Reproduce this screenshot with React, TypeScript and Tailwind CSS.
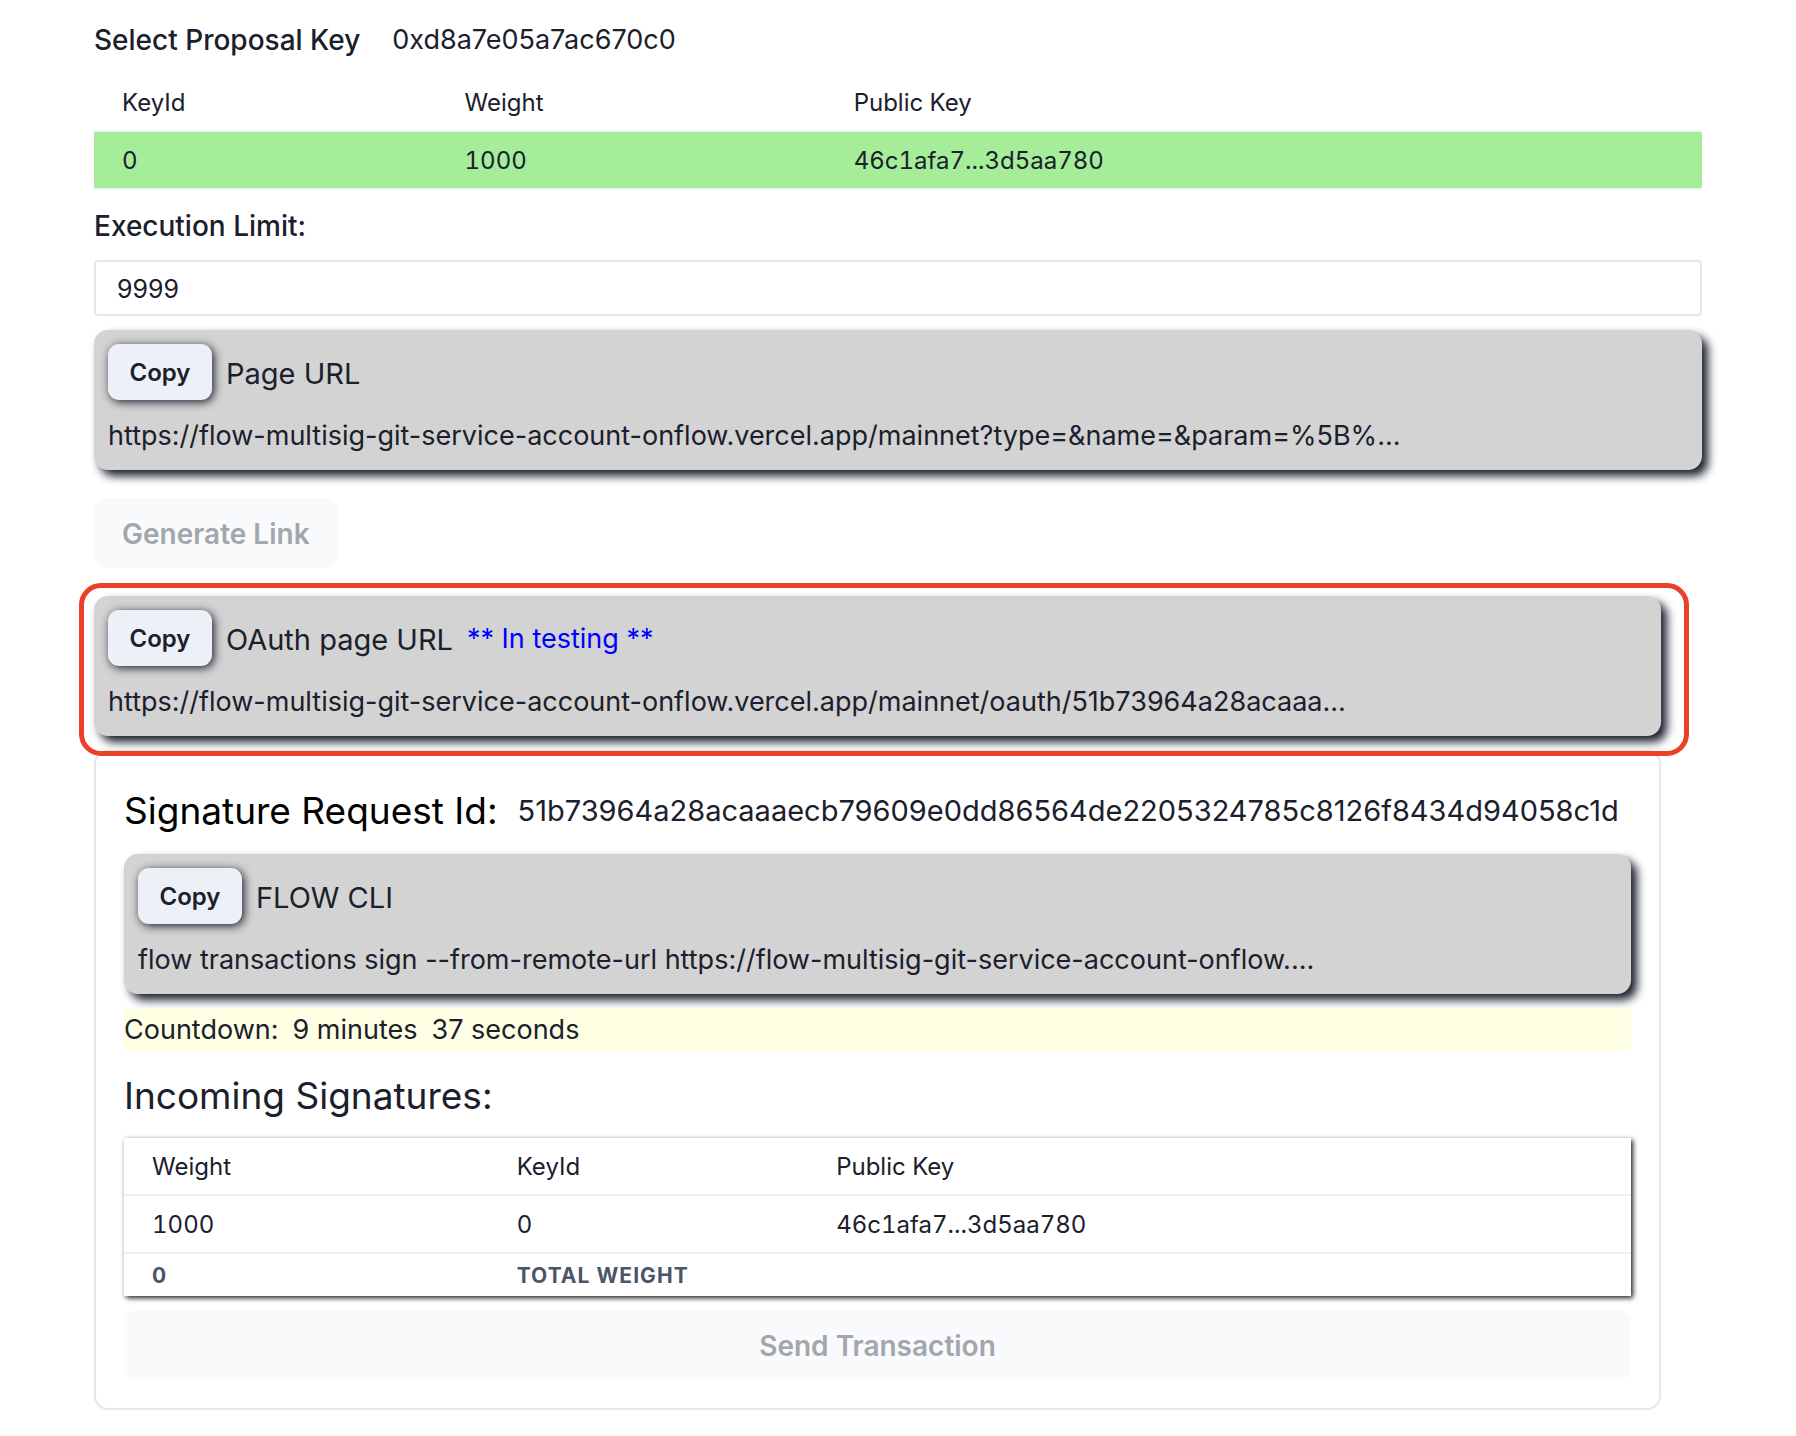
import { useState, type ReactNode } from "react";

function CopyCard({ title, note, value }: { title: string; note?: string; value: string }) {
  return (
    <div className="rounded-[14px] bg-[#d3d3d3] px-[14px] pt-[14px] pb-3 shadow-[6px_6px_10px_#1a202c]">
      <div className="flex h-14 items-center gap-[14px]">
        <button
          type="button"
          className="h-14 min-w-[104px] rounded-[11px] bg-[#edf0f6] px-5 pt-[2px] text-[24px] font-semibold shadow-[2px_2px_10px_#1a202c]"
        >
          Copy
        </button>
        <span className="pt-1 text-[29px]">{title}</span>
        {note && <span className="pt-[2px] text-[27px] text-[#0000ff]">{note}</span>}
      </div>
      <p className="mt-[14px] truncate text-[27px]">{value}</p>
    </div>
  );
}

function Row({ children, className = "" }: { children: ReactNode; className?: string }) {
  return <tr className={`h-[58px] ${className}`}>{children}</tr>;
}

const cell = "border-b-2 border-[#edf2f7] px-7 pt-[2px] text-left text-[24px] font-normal tabular-nums";
const totalCell =
  "px-7 pt-[2px] text-left text-[21px] leading-8 font-bold tracking-wider text-[#4a5568] uppercase";

export default function App() {
  const [limit, setLimit] = useState("9999");

  return (
    <main className="bg-white px-[94px] pt-[18px] pb-[26px] font-['Inter',sans-serif] text-[27px] leading-[44px] text-[#1a202c]">
      <div className="flex gap-8">
        <h2 className="text-[28px] font-medium">Select Proposal Key</h2>
        <span>0xd8a7e05a7ac670c0</span>
      </div>

      <table className="mt-3 w-full table-fixed border-separate border-spacing-0">
        <thead>
          <Row>
            <th className={`${cell} w-[21.3%]`}>KeyId</th>
            <th className={`${cell} w-[24.2%]`}>Weight</th>
            <th className={cell}>Public Key</th>
          </Row>
        </thead>
        <tbody>
          <Row className="bg-[#a6ed99]">
            <td className={cell}>0</td>
            <td className={cell}>1000</td>
            <td className={cell}>46c1afa7...3d5aa780</td>
          </Row>
        </tbody>
      </table>

      <label htmlFor="limit" className="mt-[14px] block text-[28px] font-medium">
        Execution Limit:
      </label>
      <input
        id="limit"
        value={limit}
        onChange={(e) => setLimit(e.target.value)}
        className="mt-3 block h-14 w-full rounded-[4px] border-2 border-[#e2e8f0] px-[21px] pt-[2px] text-[25px] outline-none"
      />

      <div className="mt-[14px]">
        <CopyCard
          title="Page URL"
          value="https://flow-multisig-git-service-account-onflow.vercel.app/mainnet?type=&name=&param=%5B%..."
        />
      </div>

      <button
        type="button"
        disabled
        className="mt-7 block h-[70px] rounded-[12px] bg-[#f8fafc] px-7 pt-[2px] text-[28px] font-semibold text-[#a3a6ab]"
      >
        Generate Link
      </button>

      <div className="mt-7 mr-[41px]">
        <div className="relative">
          <CopyCard
            title="OAuth page URL"
            note="** In testing **"
            value="https://flow-multisig-git-service-account-onflow.vercel.app/mainnet/oauth/51b73964a28acaaa..."
          />
          <div className="pointer-events-none absolute -top-[13px] -right-7 -bottom-5 -left-[15px] z-10 rounded-[22px] border-5 border-[#eb4128]" />
        </div>

        <section className="mt-[14px] rounded-[14px] border-2 border-[#e2e8f0] p-7">
          <div className="flex h-[60px] items-center gap-5 pt-[2px] whitespace-nowrap">
            <h2 className="text-[37px] text-black">Signature Request Id:</h2>
            <span className="text-[29px]">51b73964a28acaaaecb79609e0dd86564de2205324785c8126f8434d94058c1d</span>
          </div>

          <div className="mt-[14px]">
            <CopyCard
              title="FLOW CLI"
              value="flow transactions sign --from-remote-url https://flow-multisig-git-service-account-onflow...."
            />
          </div>

          <div className="mt-[14px] flex h-[42px] gap-[14px] bg-[#ffffe3]">
            <span>Countdown:</span>
            <span>9 minutes</span>
            <span>37 seconds</span>
          </div>

          <h2 className="mt-4 text-[37px] leading-[60px]">Incoming Signatures:</h2>

          <table className="mt-3 w-full table-fixed border-separate border-spacing-0 shadow-[2px_2px_5px_#1a202c]">
            <thead>
              <Row>
                <th className={`${cell} w-[24.2%]`}>Weight</th>
                <th className={`${cell} w-[21.2%]`}>KeyId</th>
                <th className={cell}>Public Key</th>
              </Row>
            </thead>
            <tbody>
              <Row>
                <td className={cell}>1000</td>
                <td className={cell}>0</td>
                <td className={cell}>46c1afa7...3d5aa780</td>
              </Row>
            </tbody>
            <tfoot>
              <tr className="h-[42px]">
                <th className={totalCell}>0</th>
                <th className={totalCell}>Total weight</th>
                <th className={totalCell} />
              </tr>
            </tfoot>
          </table>

          <button
            type="button"
            disabled
            className="mt-[14px] block h-[70px] w-full rounded-[12px] bg-[#f8fafc] pt-[2px] text-[28px] font-semibold text-[#a3a6ab]"
          >
            Send Transaction
          </button>
        </section>
      </div>
    </main>
  );
}
